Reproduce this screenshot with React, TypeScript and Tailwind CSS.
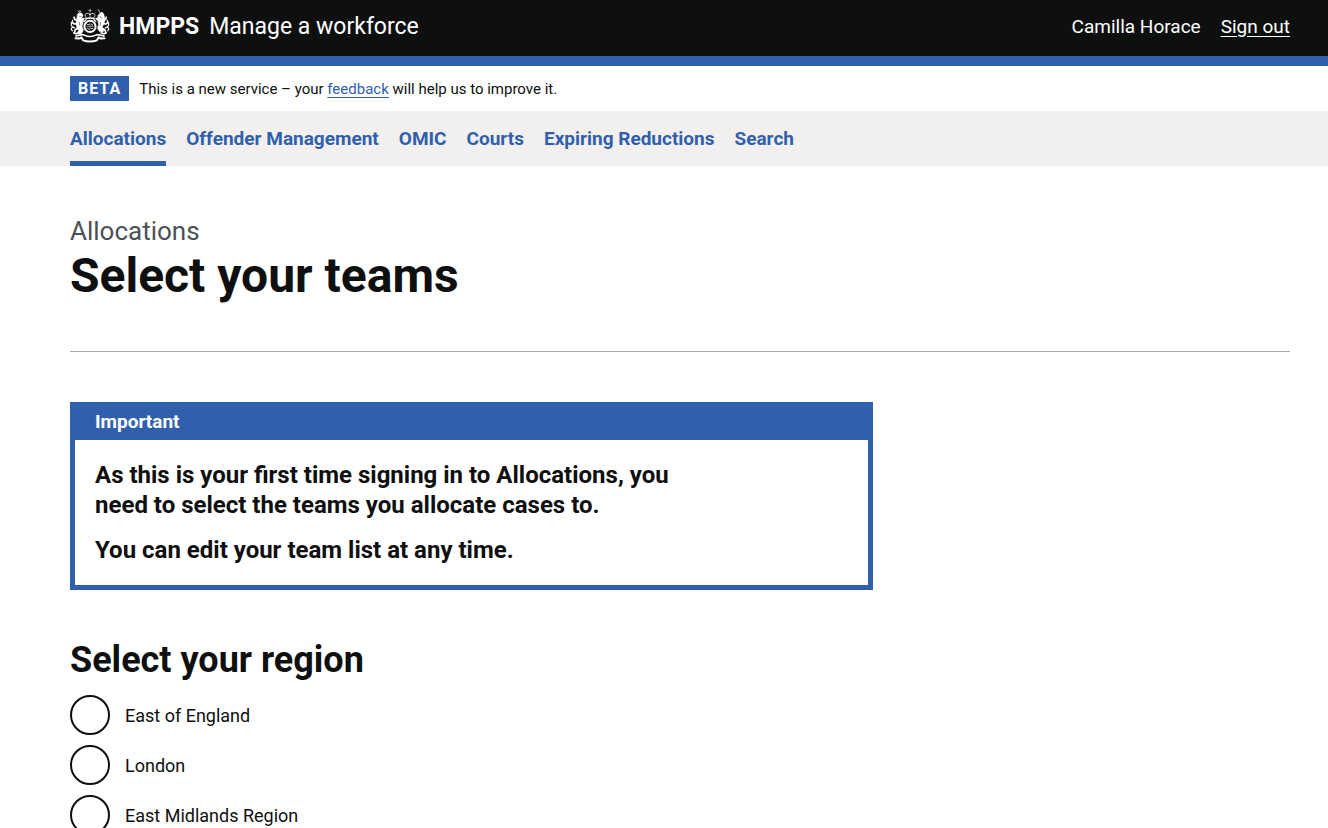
import React from "react";

const navItems: string[] = [
  "Allocations",
  "Offender Management",
  "OMIC",
  "Courts",
  "Expiring Reductions",
  "Search",
];

const regions: string[] = ["East of England", "London", "East Midlands Region"];

function Crest() {
  return (
    <svg
      viewBox="0 0 40 34"
      className="h-[34px] w-10 shrink-0"
      fill="none"
      stroke="white"
      strokeLinecap="round"
      strokeLinejoin="round"
      aria-hidden="true"
    >
      {/* crown */}
      <path d="M20 0.300v2.400M18.900 1.400h2.200" strokeWidth="0.700" opacity="0.800" />
      <path
        d="M16 8.600c-1.800-2.200-.6-4.400 1.400-4.200 1.300 0 2.200.8 2.600 1.600.4-.8 1.300-1.600 2.600-1.600 2-.2 3.200 2 1.400 4.200M20 4v4"
        strokeWidth="0.900"
        strokeDasharray="1.600 0.500"
        opacity="0.800"
      />
      <path d="M16 9.600c2.600-.7 5.400-.7 8 0" strokeWidth="1.600" />
      {/* shield inside the garter */}
      <circle cx="20" cy="17.400" r="5.600" strokeWidth="2" />
      <path d="M20 14v7M16.700 17.400h6.600" strokeWidth="0.600" opacity="0.800" />
      <path
        d="M17.400 15.600h1.500M21.300 15.200l1.400 1M17.600 19.400l1.300.6M21.200 19.400h1.400"
        strokeWidth="1"
        opacity="0.850"
      />
      <path d="M14.200 12.400l1.800-1.700M25.800 12.400l-1.800-1.700" strokeWidth="1.300" />
      {/* lion */}
      <path
        d="M7.600 5l2-1.600 2.400 1.200 1 2-.9 2 1.600 2.400-.8 3-.9 3.200 1.400 4.200-1.900 3-3 1-1.800-1.200 2-2.600-1.600-2.400-1.200-4.600.7-4z"
        fill="white"
        strokeWidth="0.500"
      />
      <path d="M8.300 2.600l1.200-.7 1.500.6" strokeWidth="0.800" />
      <path
        d="M7.300 11.800l-2.500-1.600-.8-2M7.300 14.600l-3 .4-1.800-1.200M11.500 11l2.400-1.400M7.800 19.200l-2.500 1.600-.8 2.200M9 24l-3 .8-2.200-.9"
        strokeWidth="1.700"
      />
      <path
        d="M4.700 18.800c-2.700-.5-4-2.700-3.300-4.800.4-1.200 1.300-1.600 1.500-2.800M2.500 18l-1.400 1.800 1.200 2"
        strokeWidth="1.200"
        strokeDasharray="2.400 0.500"
      />
      <path d="M9.600 7.400h1.400M9.400 13.500l.5 3" stroke="#0e100f" strokeWidth="0.500" />
      {/* unicorn */}
      <path
        d="M27.700 7l2.100-2.600 2.200-1.300 1.600 1.600 1 3.600.2 3.600-1.400 4-1.400 2.600 2.200 2.800-1.700 2-3-.8-2.100-3 1.200-4-.7-3.200-.8-3.200 1.600-1.900z"
        fill="white"
        strokeWidth="0.500"
      />
      <path d="M30.200 4L28.200 0.600" strokeWidth="0.700" />
      <path
        d="M33 11.800l2.500-1.600.8-2M33 14.600l2.800.4 1.700-1.200M28.500 11l-2.400-1.400M32.300 19.200l2.600 1.700.7 2.200M31 24l3 .8 2.200-.9"
        strokeWidth="1.700"
      />
      <path
        d="M35.300 18.800c2.700-.5 3.900-2.700 3.200-4.800-.4-1.200-1.200-1.600-1.400-2.800M37.500 18l1.400 1.800-1.200 2"
        strokeWidth="1.200"
        strokeDasharray="2.400 0.500"
      />
      <path d="M30 7.200l1.400 2M30.600 13.500l-.5 3" stroke="#0e100f" strokeWidth="0.500" />
      {/* compartment and motto ribbon */}
      <path
        d="M6 26.900c3-.2 4.500-1.500 7-1.200 2 .3 2.600 1.800 7 1.800s5-1.500 7-1.800c2.500-.3 4 1 7 1.200"
        strokeWidth="1.600"
      />
      <path
        d="M5.500 29.300l3.600.3 2.400-1.200 1.700 3c2.200.9 4.300 1.200 6.800 1.200s4.600-.3 6.800-1.200l1.700-3 2.400 1.200 3.600-.3"
        strokeWidth="2"
      />
    </svg>
  );
}

export default function App() {
  return (
    <div className="bg-white font-[Roboto,'Liberation_Sans',sans-serif] text-[18px] leading-[25px] text-[#0e100f]">
      <header className="border-b-10 border-[#3060ac] bg-[#0e100f] text-white">
        <div className="flex h-14 items-center justify-between pr-[38px] pb-1 pl-[70px]">
          <div className="flex items-center text-[23px] leading-[31px]">
            <Crest />
            <a href="#home" className="ml-[9px] font-bold">
              HMPPS
            </a>
            <a href="#service" className="ml-[10px]">
              Manage a workforce
            </a>
          </div>
          <div className="flex items-center gap-5 text-[19px]">
            <span>Camilla Horace</span>
            <a href="#sign-out" className="underline underline-offset-3">
              Sign out
            </a>
          </div>
        </div>
      </header>

      <div className="flex items-center gap-[10px] py-[10px] pr-[38px] pl-[70px]">
        <strong className="bg-[#3060ac] px-2 text-[16px] leading-[25px] font-bold tracking-[1px] text-white">
          BETA
        </strong>
        <p className="text-[15px] leading-5">
          This is a new service – your{" "}
          <a href="#feedback" className="text-[#3060ac] underline underline-offset-3">
            feedback
          </a>{" "}
          will help us to improve it.
        </p>
      </div>

      <nav aria-label="Primary" className="bg-[#f1f0ee] pr-[38px] pl-[70px]">
        <ul className="flex gap-5">
          {navItems.map((item, index) => (
            <li key={item}>
              <a
                href="#nav"
                aria-current={index === 0 ? "page" : undefined}
                className={
                  "block border-b-5 pt-[15px] pb-[10px] text-[19px] leading-[25px] font-bold text-[#3060ac] " +
                  (index === 0 ? "border-[#3060ac]" : "border-transparent")
                }
              >
                {item}
              </a>
            </li>
          ))}
        </ul>
      </nav>

      <main className="pt-[50px] pr-[38px] pl-[70px]">
        <p className="text-[26px] leading-[30px] text-[#4b5157]">Allocations</p>
        <h1 className="mt-[5px] text-[48px] leading-[50px] font-bold">Select your teams</h1>
        <hr className="my-[50px] border-t border-[#a9abad]" />

        <div className="-mx-[15px]">
          <div className="w-2/3 px-[15px]">
            <section
              aria-labelledby="banner-title"
              className="border-5 border-t-0 border-[#3060ac]"
            >
              <h2
                id="banner-title"
                className="bg-[#3060ac] px-5 pt-[7px] pb-[6px] text-[19px] leading-[25px] font-bold text-white"
              >
                Important
              </h2>
              <div className="p-5 text-[24px] leading-[30px] font-bold">
                <p className="max-w-[605px]">
                  As this is your first time signing in to Allocations, you need to select the
                  teams you allocate cases to.
                </p>
                <p className="mt-[15px]">You can edit your team list at any time.</p>
              </div>
            </section>

            <fieldset className="mt-[50px]">
              <legend className="text-[36px] leading-10 font-bold">Select your region</legend>
              <div className="mt-[15px] flex flex-col gap-[10px]">
                {regions.map((region, index) => (
                  <div key={region} className="flex items-center">
                    <input
                      type="radio"
                      name="region"
                      id={`region-${index}`}
                      className="size-10 shrink-0 appearance-none rounded-full border-2 border-[#0e100f] bg-white checked:bg-[#0e100f] checked:shadow-[inset_0_0_0_8px_white]"
                    />
                    <label htmlFor={`region-${index}`} className="px-[15px]">
                      {region}
                    </label>
                  </div>
                ))}
              </div>
            </fieldset>
          </div>
        </div>
      </main>
    </div>
  );
}
